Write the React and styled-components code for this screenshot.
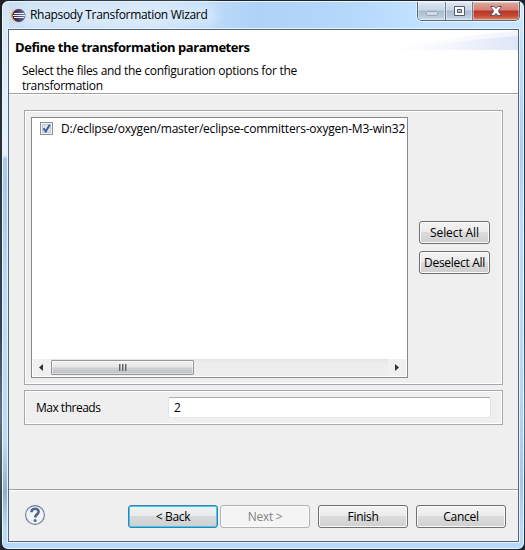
import React from "react";
import styled, { createGlobalStyle, css } from "styled-components";

const GlobalStyle = createGlobalStyle`
  * { box-sizing: border-box; }
  body { margin: 0; overflow: hidden; background: #25292f; }
  button, input { font: inherit; letter-spacing: inherit; color: inherit; margin: 0; }
`;

const Window = styled.div`
  width: 525px;
  height: 550px;
  padding: 1px 1px 1px 2px;
  background: linear-gradient(#1f2329, #39424b 60%, #69717a 75%, #20252b);
  font: 12px/15px "Open Sans", "Noto Sans", sans-serif;
  letter-spacing: -0.3px;
  color: #000;
`;

const Frame = styled.div`
  width: 522px;
  height: 548px;
  padding: 0 4px 6px 5px;
  display: flex;
  flex-direction: column;
  border: 1px solid #e9f6ff;
  border-radius: 6px;
  background:
    linear-gradient(#d3e5f6 0, #dcebfa 60px, #e6f1fc 153px, #a9c8ea 157px, #a9cbee 200px, #b9dcfd 300px, #b9dcfd 440px, #8eaed0 490px, #b7d9fb 525px) left / 6px 100% no-repeat,
    linear-gradient(#d6eafd 0, #c0e0fd 40px, #a9cef3 150px, #b9ddff 220px, #b5d9fb 380px, #a5c7ec 480px, #b7d9fb 525px) right / 6px 100% no-repeat,
    linear-gradient(transparent 500px, #b7d9fb 530px),
    linear-gradient(100deg, #cadff3 0, #d2e5f8 150px, #aed3f7 250px, #b4d8fa 340px, #bfe0ff 400px, #d2e8fd 100%);
`;

const TitleBar = styled.header`
  height: 27px;
  flex: none;
  display: flex;
  align-items: flex-start;
  padding-left: 3px;
`;

const LogoSvg = styled.svg`
  width: 15px;
  height: 15px;
  margin-top: 6px;
`;

const Title = styled.h1`
  margin: 5px 0 0 -3px;
  padding: 0 7px;
  font: inherit;
  line-height: 16px;
  letter-spacing: -0.32px;
  white-space: nowrap;
  border-radius: 8px;
  background: rgba(225, 239, 252, 0.45);
  box-shadow: 0 0 8px 4px rgba(225, 239, 252, 0.45);
`;

const Controls = styled.div`
  height: 19px;
  margin: 0 -1px 0 auto;
  display: flex;
  overflow: hidden;
  border: 1px solid #536475;
  border-top: 0;
  border-radius: 0 0 5px 5px;
  box-shadow: 0 1px 0 #eff8ff, 1px 0 0 #e2f1ff, -1px 0 0 #e2f1ff;
`;

const Control = styled.button`
  width: ${(p) => p.$width}px;
  height: 18px;
  padding: 0;
  display: grid;
  place-items: center;
  border: 0;
  border-right: ${(p) => (p.$close ? 0 : "1px solid #6c7f93")};
  background: ${(p) =>
    p.$close
      ? "linear-gradient(#dfa79c 0, #d48377 8px, #b93425 9px, #c74a35 14px, #dd8b6c 18px)"
      : "linear-gradient(#dbe6f1 0, #c8d5e3 8px, #a9bccf 9px, #b5c8da 14px, #cfdfed 18px)"};
  box-shadow: inset 0 0 0 1px rgba(255, 255, 255, 0.4);
`;

const Client = styled.main`
  flex: 1;
  min-height: 0;
  display: flex;
  flex-direction: column;
  border: 1px solid #566577;
  box-shadow: 0 0 0 1px #e4f3ff;
  background: #efefef;
`;

const Banner = styled.section`
  height: 64px;
  flex: none;
  padding: 9px 0 0 6px;
  background: #fff;
  border-bottom: 1px solid #a0a0a0;
  position: relative;
`;

const BannerArt = styled.svg`
  position: absolute;
  right: 0;
  top: 0;
  width: 150px;
  height: 20px;
`;

const Heading = styled.h2`
  margin: 0;
  font-size: 13px;
  line-height: 16px;
  font-weight: 700;
  letter-spacing: -0.45px;
  position: relative;
`;

const Description = styled.p`
  width: 290px;
  margin: 8px 0 0 7px;
  letter-spacing: -0.28px;
`;

const Body = styled.section`
  height: 396px;
  flex: none;
  padding: 15px 15px 0;
  display: flex;
  flex-direction: column;
  gap: 5px;
  border-top: 1px solid #fff;
  border-bottom: 1px solid #a0a0a0;
`;

const groupEdge = css`
  border: 1px solid #a7a7b0;
  box-shadow: inset 0 0 0 1px #fff;
`;

const FileGroup = styled.div`
  ${groupEdge}
  height: 275px;
  display: flex;
  gap: 11px;
  padding: 6px;
`;

const ThreadsGroup = styled.div`
  ${groupEdge}
  height: 35px;
  display: flex;
  align-items: center;
  padding: 0 11px;
`;

const FileList = styled.div`
  width: 377px;
  height: 261px;
  border: 1px solid #828790;
  padding: 1px;
  background: #fff;
  display: flex;
  flex-direction: column;
`;

const FileRow = styled.label`
  height: 19px;
  flex: none;
  display: flex;
  align-items: center;
  padding-left: 7px;
  overflow: hidden;
  white-space: nowrap;
`;

const CheckSvg = styled.svg`
  width: 13px;
  height: 13px;
  flex: none;
  margin: 0 8px 0 0;
`;

const FileName = styled.span`
  overflow: hidden;
  letter-spacing: -0.21px;
`;

const ScrollTrack = styled.div`
  height: 17px;
  margin-top: auto;
  display: flex;
  align-items: center;
  background: linear-gradient(#e3e3e3, #ececec 3px, #efefef);
`;

const ArrowButton = styled.button`
  width: 18px;
  height: 17px;
  padding: ${(p) => (p.$end ? "0" : "0 2px 0 0")};
  display: grid;
  place-items: center;
  border: 0;
  background: #f0f0f0;
  margin-left: ${(p) => (p.$end ? "auto" : 0)};
`;

const Thumb = styled.div`
  width: 143px;
  height: 15px;
  display: grid;
  place-items: center;
  border: 1px solid #979797;
  border-radius: 1px;
  background: linear-gradient(#f3f3f3, #e7e7e8 6px, #cfd0d2 7px, #bfc0c4);
  box-shadow: inset 0 0 0 1px rgba(255, 255, 255, 0.45);
`;

const SelectionActions = styled.div`
  display: flex;
  flex-direction: column;
  gap: 7px;
  padding-top: 104px;
`;

const buttonLook = {
  normal: css`
    border: 1px solid #707070;
    background: linear-gradient(#f3f3f3, #ebebeb 48%, #dcdcdc 50%, #cfcfcf);
    box-shadow: inset 0 0 0 1px #fbfbfb;
  `,
  primary: css`
    border: 1px solid #3c7fb1;
    background: linear-gradient(#f0f3f4, #e8eaeb 48%, #d8d9da 50%, #cfd0d1);
    box-shadow: inset 0 0 0 1px #39cdf2;
  `,
  disabled: css`
    border: 1px solid #adb2b5;
    background: #f4f4f4;
    color: #838383;
    box-shadow: inset 0 0 0 1px #fcfcfc;
  `,
};

const Button = styled.button`
  width: ${(p) => p.$width || 90}px;
  height: 23px;
  padding: 0;
  border-radius: 3px;
  white-space: nowrap;
  line-height: 19px;
  letter-spacing: ${(p) => p.$tracking || "-0.3px"};
  ${(p) => buttonLook[p.$look || "normal"]}
`;

const FieldLabel = styled.label`
  width: 132px;
  letter-spacing: -0.5px;
`;

const Field = styled.input`
  width: 323px;
  height: 21px;
  padding: 0 5px;
  border: 1px solid;
  border-color: #abadb3 #e2e3ea #e3e9ef #e2e3ea;
  border-radius: 2px;
  background: #fff;
  outline: 0;
`;

const Footer = styled.footer`
  flex: 1;
  display: flex;
  align-items: flex-start;
  padding: 14px 12px 0 15px;
  border-top: 1px solid #fff;
`;

const HelpSvg = styled.svg`
  width: 22px;
  height: 22px;
  margin-top: -1px;
`;

const NavButtons = styled.div`
  display: flex;
  gap: 8px;
  margin-left: auto;
`;

const StepButtons = styled.div`
  display: flex;
  gap: 2px;
`;

const Logo = () => (
  <LogoSvg viewBox="0 0 15 15">
    <circle cx="6.5" cy="7.5" r="6.5" fill="#f39a35" />
    <circle cx="8" cy="7.5" r="6.5" fill="#2c2255" />
    <path d="M3 5.5h10M2 7.5h12M3 9.5h10" stroke="#f3f1fa" strokeWidth="1.1" />
  </LogoSvg>
);

const Checkmark = () => (
  <CheckSvg viewBox="0 0 13 13">
    <rect x=".5" y=".5" width="12" height="12" fill="#f4f4f4" stroke="#8e8f8f" />
    <rect x="2.5" y="2.5" width="8" height="8" fill="#dfe3e8" stroke="#c4c9d0" />
    <path d="M3.5 6.2l2.2 3.3L9.8 2.8" fill="none" stroke="#3e5ba4" strokeWidth="2" />
  </CheckSvg>
);

export default function App() {
  return (
    <>
      <GlobalStyle />
      <Window>
        <Frame>
          <TitleBar>
            <Logo />
            <Title>Rhapsody Transformation Wizard</Title>
            <Controls>
              <Control $width={28} aria-label="Minimize">
                <svg width="14" height="18">
                  <rect x="1.5" y="9.5" width="11" height="4" rx="1" fill="#d4dbe3" stroke="#98a5b4" />
                </svg>
              </Control>
              <Control $width={27} aria-label="Maximize">
                <svg width="13" height="18">
                  <path d="M1.5 4.5h10v9h-10zM4.5 7.5v3h4v-3z" fill="#f8fafc" fillRule="evenodd" stroke="#535b6c" />
                </svg>
              </Control>
              <Control $width={46} $close aria-label="Close">
                <svg width="14" height="18">
                  <path d="M1.5 4.5h3.8L7 6.5l1.7-2h3.8L9.3 9l3.2 4.5H8.7L7 11.5l-1.7 2H1.5L4.7 9z" fill="#fff" stroke="#5c5664" />
                </svg>
              </Control>
            </Controls>
          </TitleBar>
          <Client>
            <Banner>
              <BannerArt viewBox="0 0 150 20" preserveAspectRatio="none">
                <defs>
                  <linearGradient id="sweep">
                    <stop offset="0" stopColor="#fff" />
                    <stop offset=".4" stopColor="#f8f9fe" />
                    <stop offset="1" stopColor="#dde4f7" />
                  </linearGradient>
                </defs>
                <path d="M10 20C55 14 100 4 150 1V20z" fill="url(#sweep)" opacity=".4" />
                <path d="M10 20C60 17 105 9 150 6V20z" fill="url(#sweep)" opacity=".9" />
              </BannerArt>
              <Heading>Define the transformation parameters</Heading>
              <Description>
                Select the files and the configuration options for the transformation
              </Description>
            </Banner>
            <Body>
              <FileGroup>
                <FileList>
                  <FileRow>
                    <Checkmark />
                    <FileName>D:/eclipse/oxygen/master/eclipse-committers-oxygen-M3-win32</FileName>
                  </FileRow>
                  <ScrollTrack>
                    <ArrowButton aria-label="Scroll left">
                      <svg width="4" height="7"><path d="M4 0v7L0 3.5z" fill="#333" /></svg>
                    </ArrowButton>
                    <Thumb>
                      <svg width="8" height="7">
                        <path d="M.5 0v7M3.5 0v7M6.5 0v7" stroke="#5f6266" />
                        <path d="M1.5 0v7M4.5 0v7M7.5 0v7" stroke="#a5a8ac" />
                      </svg>
                    </Thumb>
                    <ArrowButton $end aria-label="Scroll right">
                      <svg width="4" height="7"><path d="M0 0v7l4-3.5z" fill="#333" /></svg>
                    </ArrowButton>
                  </ScrollTrack>
                </FileList>
                <SelectionActions>
                  <Button $width={71} $tracking="-0.1px">Select All</Button>
                  <Button $width={71}>Deselect All</Button>
                </SelectionActions>
              </FileGroup>
              <ThreadsGroup>
                <FieldLabel htmlFor="threads">Max threads</FieldLabel>
                <Field id="threads" defaultValue="2" />
              </ThreadsGroup>
            </Body>
            <Footer>
              <HelpSvg viewBox="0 0 22 22">
                <circle cx="11" cy="11" r="9.4" fill="#f2f4f7" stroke="#66799a" strokeWidth="1.1" />
                <path d="M7.4 8.2C7.6 3.6 14.6 3.8 14.6 7.8 14.6 10.4 11.2 10.4 11.2 13.4" fill="none" stroke="#4f6488" strokeWidth="2.6" />
                <circle cx="11.1" cy="16.4" r="1.5" fill="#4f6488" />
              </HelpSvg>
              <NavButtons>
                <StepButtons>
                  <Button $look="primary">&lt; Back</Button>
                  <Button $look="disabled" disabled>Next &gt;</Button>
                </StepButtons>
                <Button>Finish</Button>
                <Button>Cancel</Button>
              </NavButtons>
            </Footer>
          </Client>
        </Frame>
      </Window>
    </>
  );
}
